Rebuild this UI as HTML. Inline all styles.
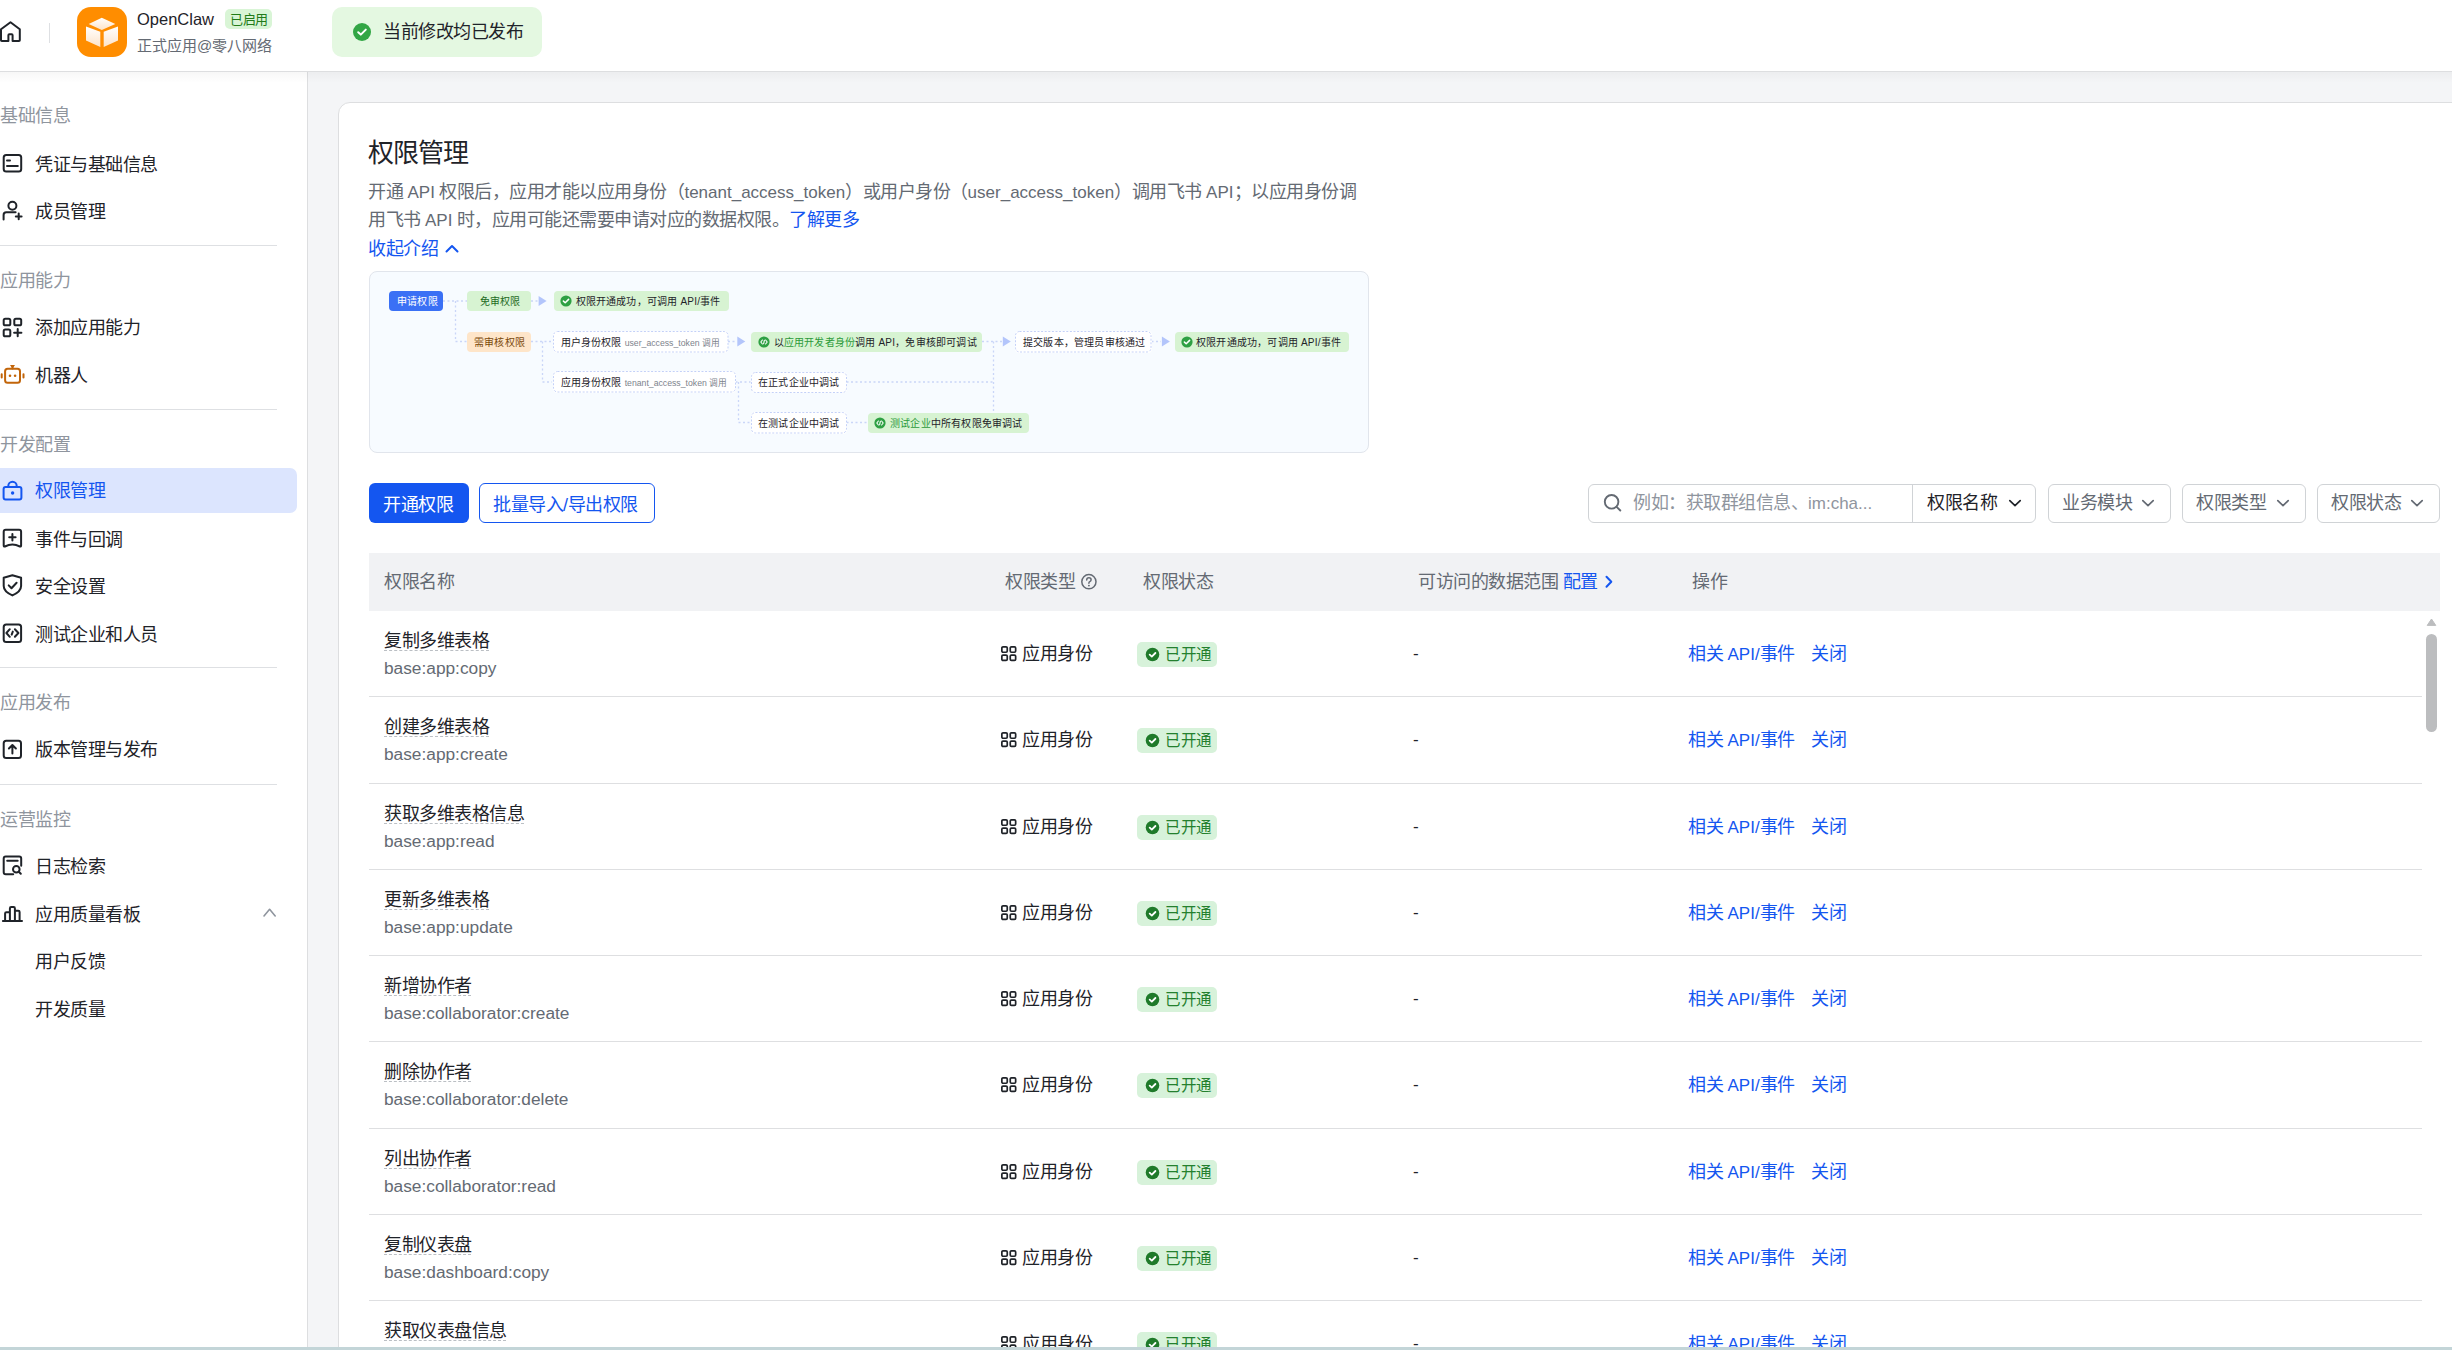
<!DOCTYPE html>
<html lang="zh-CN">
<head>
<meta charset="utf-8">
<style>
*{box-sizing:border-box;margin:0;padding:0}
html,body{width:2452px;height:1350px;overflow:hidden;background:#fff}
body{font-family:"Liberation Sans",sans-serif;color:#1f2329;position:relative}
.a{position:absolute;white-space:nowrap}
.ic{position:absolute;overflow:visible}
#hdr{left:0;top:0;width:2452px;height:72px;background:#fff;border-bottom:1px solid #dddee0}
#side{left:0;top:72px;width:308px;height:1275px;background:#fff;border-right:1px solid #dddee0}
#mainbg{left:308px;top:72px;width:2144px;height:1275px;background:#f4f5f7}
#card{left:338px;top:102px;width:2300px;height:1400px;background:#fff;border:1px solid #dddee0;border-radius:12px}
#foot{left:0;top:1347px;width:2452px;height:3px;background:#c3d5d8}
.st{font-size:18px;letter-spacing:-0.5px;line-height:20px;color:#8f959e}
.it{font-size:18px;letter-spacing:-0.5px;line-height:20px;color:#1f2329}
.l{font-size:0.945em;letter-spacing:0}
.dg{font-size:10px;letter-spacing:0.2px;line-height:12px;font-weight:500;color:#1f2329}
.db{position:absolute;border-radius:4px}
.dw{background:#fff}
.dgr{background:#d7f3d2}
</style>
</head>
<body>
<div class="a" id="mainbg"></div>
<div class="a" id="hdr"></div>
<div class="a" id="side"></div>
<div class="a" id="card"></div>
<div class="a" id="foot"></div>
<div class="a" style="left:0;top:72px;width:2452px;height:11px;background:linear-gradient(rgba(0,0,0,0.03),rgba(0,0,0,0))"></div>
<svg class="ic" style="left:0;top:20px" width="24" height="24" viewBox="0 0 24 24"><path d="M1 9.2 L10.5 2.2 L19.8 9.2 V20.2 Q19.8 21 19 21 H12.6 V15.2 Q12.6 14.3 11.7 14.3 H9.3 Q8.4 14.3 8.4 15.2 V21 H1.8 Q1 21 1 20.2 Z" fill="none" stroke="#1f2329" stroke-width="2" stroke-linejoin="round"/></svg>
<div class="a" style="left:49px;top:23px;width:1px;height:20px;background:#dee0e3"></div>
<svg class="ic" style="left:77px;top:7px" width="50" height="50" viewBox="0 0 50 50">
<defs><linearGradient id="cg" x1="0" y1="0" x2="0" y2="1"><stop offset="0" stop-color="#fff"/><stop offset="1" stop-color="#fde3c8"/></linearGradient></defs>
<rect x="0" y="0" width="50" height="50" rx="14" fill="#ff8d00"/>
<path d="M11.7 16.9 L24.8 10.7 L38.3 16.9 L24.8 23 Z" fill="url(#cg)"/>
<path d="M9 19.6 L23.3 24.8 L23.3 40 L9 33.4 Z" fill="url(#cg)"/>
<path d="M26.7 24.8 L41 19.6 L41 33.4 L26.7 40 Z" fill="url(#cg)"/>
</svg>
<div class="a" style="left:137px;top:9px;font-size:16.5px;line-height:20px;color:#1f2329">OpenClaw</div>
<div class="a" style="left:225px;top:9px;width:47px;height:20px;border-radius:5px;background:#d9f5d6"></div>
<div class="a" style="left:230px;top:11px;font-size:13px;letter-spacing:-0.5px;line-height:18px;color:#237b19">已启用</div>
<div class="a" style="left:137px;top:37px;font-size:15px;line-height:18px;color:#646a73">正式应用@零八网络</div>
<div class="a" style="left:332px;top:7px;width:210px;height:50px;border-radius:10px;background:#e4f8e1"></div>
<svg class="ic" style="left:353px;top:23px" width="18" height="18" viewBox="0 0 18 18"><circle cx="9" cy="9" r="9" fill="#32a645"/><path d="M5.2 9.2 L7.8 11.6 L12.8 6.6" fill="none" stroke="#fff" stroke-width="2" stroke-linecap="round" stroke-linejoin="round"/></svg>
<div class="a" style="left:383px;top:21px;font-size:18px;letter-spacing:-0.5px;line-height:22px;color:#1f2329">当前修改均已发布</div>
<div class="a st" style="left:0;top:106px">基础信息</div>
<div class="a st" style="left:0;top:271px">应用能力</div>
<div class="a st" style="left:0;top:435px">开发配置</div>
<div class="a st" style="left:0;top:693px">应用发布</div>
<div class="a st" style="left:0;top:810px">运营监控</div>
<div class="a" style="left:0;top:245px;width:277px;height:1px;background:#dee0e3"></div>
<div class="a" style="left:0;top:409px;width:277px;height:1px;background:#dee0e3"></div>
<div class="a" style="left:0;top:667px;width:277px;height:1px;background:#dee0e3"></div>
<div class="a" style="left:0;top:784px;width:277px;height:1px;background:#dee0e3"></div>
<div class="a" style="left:0;top:468px;width:297px;height:45px;border-radius:0 7px 7px 0;background:#dce5fe"></div>
<div class="a it" style="left:35px;top:155px;color:#1f2329">凭证与基础信息</div>
<div class="a it" style="left:35px;top:202px;color:#1f2329">成员管理</div>
<div class="a it" style="left:35px;top:318px;color:#1f2329">添加应用能力</div>
<div class="a it" style="left:35px;top:366px;color:#1f2329">机器人</div>
<div class="a it" style="left:35px;top:481px;color:#1456f0">权限管理</div>
<div class="a it" style="left:35px;top:530px;color:#1f2329">事件与回调</div>
<div class="a it" style="left:35px;top:577px;color:#1f2329">安全设置</div>
<div class="a it" style="left:35px;top:625px;color:#1f2329">测试企业和人员</div>
<div class="a it" style="left:35px;top:740px;color:#1f2329">版本管理与发布</div>
<div class="a it" style="left:35px;top:857px;color:#1f2329">日志检索</div>
<div class="a it" style="left:35px;top:905px;color:#1f2329">应用质量看板</div>
<div class="a it" style="left:35px;top:952px;color:#1f2329">用户反馈</div>
<div class="a it" style="left:35px;top:1000px;color:#1f2329">开发质量</div>
<svg class="ic" style="left:0;top:151px" width="25" height="25" viewBox="0 0 25 25"><g stroke="#1f2329" stroke-width="2" fill="none" stroke-linecap="round" stroke-linejoin="round"><rect x="3.7" y="4.1" width="17.5" height="16.4" rx="2.5"/><path d="M7 9.6 H10"/><path d="M7 15.1 H17.8"/></g></svg>
<svg class="ic" style="left:0;top:198px" width="25" height="25" viewBox="0 0 25 25"><g stroke="#1f2329" stroke-width="2" fill="none" stroke-linecap="round" stroke-linejoin="round"><circle cx="12.4" cy="7.7" r="4"/><path d="M3.6 21.4 V17 Q3.6 14.3 6.3 14.3 H15.6"/><path d="M15.8 18.4 H21.6 M18.7 15.5 V21.3"/></g></svg>
<svg class="ic" style="left:0;top:314px" width="25" height="25" viewBox="0 0 25 25"><g stroke="#1f2329" stroke-width="2" fill="none" stroke-linecap="round" stroke-linejoin="round"><rect x="3.7" y="4.7" width="6.6" height="6.6" rx="1.6"/><rect x="14.3" y="4.7" width="6.9" height="6.6" rx="1.6"/><rect x="3.7" y="15.4" width="6.6" height="6.9" rx="1.6"/><path d="M14.1 18.7 H21.4 M17.7 15.1 V22.3"/></g></svg>
<svg class="ic" style="left:0;top:363px" width="25" height="25" viewBox="0 0 25 25"><g stroke="#c2650a" stroke-width="2" fill="none" stroke-linecap="round" stroke-linejoin="round"><rect x="5.1" y="5.8" width="14.9" height="14" rx="2.5"/><path d="M1.7 11.2 V14.4 M23.5 11.2 V14.4"/><path d="M12.5 3 V5.5"/></g><g fill="#c2650a"><path d="M10 2.1 H15 L13.3 4.4 H11.7 Z"/><circle cx="10" cy="12.8" r="1.3"/><circle cx="15.1" cy="12.8" r="1.3"/></g></svg>
<svg class="ic" style="left:0;top:478px" width="25" height="25" viewBox="0 0 25 25"><g stroke="#1456f0" stroke-width="2" fill="none" stroke-linecap="round" stroke-linejoin="round"><rect x="3.6" y="9" width="17.8" height="12.5" rx="2"/><path d="M8.3 9 V7.9 A4.2 4.2 0 0 1 16.7 7.9 V9"/></g><g fill="#1456f0"><circle cx="12.6" cy="15" r="1.7"/></g></svg>
<svg class="ic" style="left:0;top:525px" width="25" height="25" viewBox="0 0 25 25"><g stroke="#1f2329" stroke-width="2" fill="none" stroke-linecap="round" stroke-linejoin="round"><path d="M3.7 20.6 V6.7 Q3.7 4.7 5.7 4.7 H19.1 Q21.1 4.7 21.1 6.7 V20.6 Q21.1 21.8 19.9 21.5 Q16 19.6 12.4 19.6 Q8.8 19.6 4.9 21.5 Q3.7 21.8 3.7 20.6 Z"/><path d="M9.2 12.3 H15.6 M12.4 9.1 V15.5"/></g></svg>
<svg class="ic" style="left:0;top:573px" width="25" height="25" viewBox="0 0 25 25"><g stroke="#1f2329" stroke-width="2" fill="none" stroke-linecap="round" stroke-linejoin="round"><path d="M12.4 2.3 L21.1 4.8 V13 Q21.1 18.5 12.4 22.4 Q3.7 18.5 3.7 13 V4.8 Z"/><path d="M8.7 12.4 L11.5 15.2 L16.6 9.7"/></g></svg>
<svg class="ic" style="left:0;top:621px" width="25" height="25" viewBox="0 0 25 25"><g stroke="#1f2329" stroke-width="2" fill="none" stroke-linecap="round" stroke-linejoin="round"><rect x="3.7" y="3.4" width="17.4" height="17.6" rx="2.5"/><path d="M9.8 8.2 L6.4 12 L9.8 15.8 M14.9 8.2 L18.4 12 L14.9 15.8 M12.8 10.6 L11.7 13.6"/></g></svg>
<svg class="ic" style="left:0;top:737px" width="25" height="25" viewBox="0 0 25 25"><g stroke="#1f2329" stroke-width="2" fill="none" stroke-linecap="round" stroke-linejoin="round"><rect x="3.7" y="3.7" width="17.3" height="17.3" rx="2.5"/><path d="M8.9 11.5 L12.4 8 L15.9 11.5 M12.4 8.2 V16.6"/></g></svg>
<svg class="ic" style="left:0;top:853px" width="25" height="25" viewBox="0 0 25 25"><g stroke="#1f2329" stroke-width="2" fill="none" stroke-linecap="round" stroke-linejoin="round"><path d="M21.2 12.8 V5.6 Q21.2 3.6 19.2 3.6 H5.7 Q3.7 3.6 3.7 5.6 V19.2 Q3.7 21.2 5.7 21.2 H13.2"/><path d="M7.2 7.7 H17.7"/><circle cx="16.3" cy="16.3" r="3.3"/><path d="M18.8 18.8 L20.8 20.8"/></g></svg>
<svg class="ic" style="left:0;top:901px" width="25" height="25" viewBox="0 0 25 25"><g stroke="#1f2329" stroke-width="2" fill="none" stroke-linecap="round" stroke-linejoin="round"><path d="M2.9 20.1 H22 M5.1 20.1 V12.6 Q5.1 11.3 6.4 11.3 H9.9 M9.9 20.1 V7.4 Q9.9 6.1 11.2 6.1 H13.6 Q14.9 6.1 14.9 7.4 V20.1 M14.9 9.7 H18.3 Q19.6 9.7 19.6 11 V20.1"/></g></svg>
<svg class="ic" style="left:260px;top:904px" width="18" height="16" viewBox="0 0 18 16"><path d="M4 12 L9.6 5.3 L15.2 12" fill="none" stroke="#8f959e" stroke-width="1.6" stroke-linecap="round" stroke-linejoin="round"/></svg>
<div class="a" style="left:368px;top:138px;font-size:26px;letter-spacing:-1px;line-height:30px;color:#1f2329">权限管理</div>
<div class="a" style="left:368px;top:181px;font-size:18px;letter-spacing:-0.5px;line-height:22px;color:#646a73">开通 <span class="l">API</span> 权限后，应用才能以应用身份（<span class="l">tenant_access_token</span>）或用户身份（<span class="l">user_access_token</span>）调用飞书 <span class="l">API</span>；以应用身份调</div>
<div class="a" style="left:368px;top:209px;font-size:18px;letter-spacing:-0.5px;line-height:22px;color:#646a73">用飞书 <span class="l">API</span> 时，应用可能还需要申请对应的数据权限。<span style="color:#1456f0">了解更多</span></div>
<div class="a" style="left:368px;top:238px;font-size:18px;letter-spacing:-0.5px;line-height:22px;color:#1456f0">收起介绍</div>
<svg class="ic" style="left:444px;top:241px" width="16" height="14" viewBox="0 0 16 14"><path d="M2.5 10.5 L8 5 L13.5 10.5" fill="none" stroke="#1456f0" stroke-width="2" stroke-linecap="round" stroke-linejoin="round"/></svg>
<div class="a" style="left:369px;top:271px;width:1000px;height:182px;background:#f7fbff;border:1px solid #e1e5ec;border-radius:8px"></div>
<svg class="ic" style="left:0;top:0" width="2452" height="1350" viewBox="0 0 2452 1350"><g stroke="#cad6f8" stroke-width="1.3" stroke-dasharray="2 2.5" fill="none"><path d="M443 301 L467 301"/><path d="M455.5 301 L455.5 341.5"/><path d="M455.5 341.5 L467 341.5"/><path d="M531 301 L538 301"/><path d="M531 341.5 L552 341.5"/><path d="M542.5 341.5 L542.5 382"/><path d="M542.5 382 L552 382"/><path d="M728 341.5 L737 341.5"/><path d="M735.5 382 L750.5 382"/><path d="M738.5 382 L738.5 422.5"/><path d="M738.5 422.5 L750.5 422.5"/><path d="M846.5 382 L993.5 382"/><path d="M846.5 422.5 L868 422.5"/><path d="M982 341.5 L1002 341.5"/><path d="M993.5 341.5 L993.5 413"/><path d="M1151.5 341.5 L1161 341.5"/></g><g fill="#b3c5fb"><path d="M538.6 296 L546.6 301 L538.6 306 Z"/><path d="M737.3 336.5 L745.3 341.5 L737.3 346.5 Z"/><path d="M1002.8 336.5 L1010.8 341.5 L1002.8 346.5 Z"/><path d="M1161.9 336.5 L1169.9 341.5 L1161.9 346.5 Z"/></g></svg>
<div class="db " style="left:389px;top:291px;width:54px;height:20px;background:#3a70f5"></div>
<div class="a dg" style="left:397px;top:296px;color:#fff">申请权限</div>
<div class="db dgr" style="left:467px;top:291px;width:64px;height:20px;"></div>
<div class="a dg" style="left:479.5px;top:296px;color:#236b1e">免审权限</div>
<div class="db dgr" style="left:553.5px;top:291px;width:175.5px;height:20px;"></div>
<svg class="ic" style="left:560px;top:295px" width="12" height="12" viewBox="0 0 12 12"><circle cx="6" cy="6" r="5.6" fill="#2ea043"/><path d="M3.4 6.1 L5.2 7.8 L8.6 4.4" fill="none" stroke="#fff" stroke-width="1.5" stroke-linecap="round" stroke-linejoin="round"/></svg>
<div class="a dg" style="left:575.5px;top:296px;">权限开通成功，可调用 API/事件</div>
<div class="db " style="left:467px;top:332px;width:64px;height:20px;background:#fee5c9"></div>
<div class="a dg" style="left:474px;top:336.5px;color:#7b4a0c">需审核权限</div>
<div class="db dw" style="left:552.5px;top:331px;width:175.5px;height:21.5px;"></div>
<svg class="ic" style="left:552.5px;top:331px" width="175.5" height="21.5"><rect x="0.5" y="0.5" width="174.5" height="20.5" rx="4" fill="none" stroke="#c4d1f8" stroke-width="1" stroke-dasharray="2 1.6"/></svg>
<div class="a dg" style="left:560.5px;top:336.5px;">用户身份权限 <span style="font-size:8.7px;letter-spacing:0;font-weight:400;color:#7d838c">user_access_token 调用</span></div>
<div class="db dw" style="left:552.5px;top:371px;width:183.0px;height:21.5px;"></div>
<svg class="ic" style="left:552.5px;top:371px" width="183.0" height="21.5"><rect x="0.5" y="0.5" width="182.0" height="20.5" rx="4" fill="none" stroke="#c4d1f8" stroke-width="1" stroke-dasharray="2 1.6"/></svg>
<div class="a dg" style="left:560.5px;top:377px;">应用身份权限 <span style="font-size:8.7px;letter-spacing:0;font-weight:400;color:#7d838c">tenant_access_token 调用</span></div>
<div class="db dgr" style="left:751px;top:332px;width:231px;height:19.5px;"></div>
<svg class="ic" style="left:757.5px;top:335.5px" width="12" height="12" viewBox="0 0 12 12"><circle cx="6" cy="6" r="5.6" fill="#2ea043"/><path d="M4.4 4 L2.8 6 L4.4 8 M7.6 4 L9.2 6 L7.6 8 M6.4 4.2 L5.6 7.8" fill="none" stroke="#fff" stroke-width="1.1" stroke-linecap="round" stroke-linejoin="round"/></svg>
<div class="a dg" style="left:773.5px;top:336.5px;">以<span style="color:#2c9a3a">应用开发者身份</span>调用 API，免审核即可调试</div>
<div class="db dw" style="left:750.5px;top:371.5px;width:96.0px;height:21.0px;"></div>
<svg class="ic" style="left:750.5px;top:371.5px" width="96.0" height="21.0"><rect x="0.5" y="0.5" width="95.0" height="20.0" rx="4" fill="none" stroke="#c4d1f8" stroke-width="1" stroke-dasharray="2 1.6"/></svg>
<div class="a dg" style="left:758px;top:377px;">在正式企业中调试</div>
<div class="db dw" style="left:750.5px;top:412px;width:96.0px;height:21.5px;"></div>
<svg class="ic" style="left:750.5px;top:412px" width="96.0" height="21.5"><rect x="0.5" y="0.5" width="95.0" height="20.5" rx="4" fill="none" stroke="#c4d1f8" stroke-width="1" stroke-dasharray="2 1.6"/></svg>
<div class="a dg" style="left:758px;top:417.5px;">在测试企业中调试</div>
<div class="db dgr" style="left:868px;top:413px;width:160.5px;height:19.5px;"></div>
<svg class="ic" style="left:874px;top:416.5px" width="12" height="12" viewBox="0 0 12 12"><circle cx="6" cy="6" r="5.6" fill="#2ea043"/><path d="M4.4 4 L2.8 6 L4.4 8 M7.6 4 L9.2 6 L7.6 8 M6.4 4.2 L5.6 7.8" fill="none" stroke="#fff" stroke-width="1.1" stroke-linecap="round" stroke-linejoin="round"/></svg>
<div class="a dg" style="left:890px;top:417.5px;"><span style="color:#2c9a3a">测试企业</span>中所有权限免审调试</div>
<div class="db dw" style="left:1015px;top:331px;width:136.5px;height:21.5px;"></div>
<svg class="ic" style="left:1015px;top:331px" width="136.5" height="21.5"><rect x="0.5" y="0.5" width="135.5" height="20.5" rx="4" fill="none" stroke="#c4d1f8" stroke-width="1" stroke-dasharray="2 1.6"/></svg>
<div class="a dg" style="left:1023px;top:336.5px;">提交版本，管理员审核通过</div>
<div class="db dgr" style="left:1175px;top:331.5px;width:174px;height:20.5px;"></div>
<svg class="ic" style="left:1181px;top:335.5px" width="12" height="12" viewBox="0 0 12 12"><circle cx="6" cy="6" r="5.6" fill="#2ea043"/><path d="M3.4 6.1 L5.2 7.8 L8.6 4.4" fill="none" stroke="#fff" stroke-width="1.5" stroke-linecap="round" stroke-linejoin="round"/></svg>
<div class="a dg" style="left:1196px;top:336.5px;">权限开通成功，可调用 API/事件</div>
<div class="a" style="left:369px;top:483px;width:100px;height:40px;border-radius:6px;background:#1456f0"></div>
<div class="a" style="left:383px;top:494px;font-size:18px;letter-spacing:-0.5px;line-height:22px;color:#fff">开通权限</div>
<div class="a" style="left:479px;top:483px;width:176px;height:40px;border-radius:6px;border:1px solid #1456f0;background:#fff"></div>
<div class="a" style="left:493px;top:494px;font-size:18px;letter-spacing:-0.5px;line-height:22px;color:#1456f0">批量导入/导出权限</div>
<div class="a" style="left:1588px;top:484px;width:448px;height:39px;border-radius:6px;border:1px solid #d0d3d6;background:#fff"></div>
<div class="a" style="left:1912px;top:484px;width:1px;height:39px;background:#d0d3d6"></div>
<svg class="ic" style="left:1602px;top:492px" width="22" height="22" viewBox="0 0 22 22"><circle cx="9.6" cy="9.8" r="6.8" fill="none" stroke="#646a73" stroke-width="1.9"/><path d="M14.6 14.8 L18.3 18.5" stroke="#646a73" stroke-width="1.9" stroke-linecap="round"/></svg>
<div class="a" style="left:1633px;top:492px;font-size:18px;letter-spacing:-0.5px;line-height:22px;color:#8f959e">例如：获取群组信息、<span class="l">im:cha...</span></div>
<div class="a" style="left:1927px;top:492px;font-size:18px;letter-spacing:-0.5px;line-height:22px;color:#1f2329">权限名称</div>
<svg class="ic" style="left:2008px;top:498px" width="14" height="10" viewBox="0 0 14 10"><path d="M1.8 2.6 L7 7.6 L12.2 2.6" fill="none" stroke="#1f2329" stroke-width="1.7" stroke-linecap="round" stroke-linejoin="round"/></svg>
<div class="a" style="left:2047.5px;top:483.5px;width:123.0px;height:39.5px;border-radius:6px;border:1px solid #d0d3d6;background:#fff"></div>
<div class="a" style="left:2062.0px;top:492px;font-size:18px;letter-spacing:-0.5px;line-height:22px;color:#646a73">业务模块</div>
<svg class="ic" style="left:2140.5px;top:498px" width="14" height="10" viewBox="0 0 14 10"><path d="M1.8 2.6 L7 7.6 L12.2 2.6" fill="none" stroke="#646a73" stroke-width="1.7" stroke-linecap="round" stroke-linejoin="round"/></svg>
<div class="a" style="left:2181.5px;top:483.5px;width:124.0px;height:39.5px;border-radius:6px;border:1px solid #d0d3d6;background:#fff"></div>
<div class="a" style="left:2196.0px;top:492px;font-size:18px;letter-spacing:-0.5px;line-height:22px;color:#646a73">权限类型</div>
<svg class="ic" style="left:2275.5px;top:498px" width="14" height="10" viewBox="0 0 14 10"><path d="M1.8 2.6 L7 7.6 L12.2 2.6" fill="none" stroke="#646a73" stroke-width="1.7" stroke-linecap="round" stroke-linejoin="round"/></svg>
<div class="a" style="left:2316.5px;top:483.5px;width:123.0px;height:39.5px;border-radius:6px;border:1px solid #d0d3d6;background:#fff"></div>
<div class="a" style="left:2331.0px;top:492px;font-size:18px;letter-spacing:-0.5px;line-height:22px;color:#646a73">权限状态</div>
<svg class="ic" style="left:2409.5px;top:498px" width="14" height="10" viewBox="0 0 14 10"><path d="M1.8 2.6 L7 7.6 L12.2 2.6" fill="none" stroke="#646a73" stroke-width="1.7" stroke-linecap="round" stroke-linejoin="round"/></svg>
<div class="a" style="left:369px;top:553px;width:2071px;height:58px;background:#f1f2f4"></div>
<div class="a" style="left:384px;top:571px;font-size:18px;letter-spacing:-0.5px;line-height:22px;color:#646a73">权限名称</div>
<div class="a" style="left:1005px;top:571px;font-size:18px;letter-spacing:-0.5px;line-height:22px;color:#646a73">权限类型</div>
<svg class="ic" style="left:1080px;top:573px" width="18" height="18" viewBox="0 0 18 18"><circle cx="8.9" cy="8.7" r="7.1" fill="none" stroke="#646a73" stroke-width="1.5"/><path d="M6.7 7 Q6.7 4.8 8.9 4.8 Q11.1 4.8 11.1 6.8 Q11.1 8.1 9.8 8.6 Q8.9 9 8.9 10.2" fill="none" stroke="#646a73" stroke-width="1.5" stroke-linecap="round"/><circle cx="8.9" cy="12.6" r="0.95" fill="#646a73"/></svg>
<div class="a" style="left:1143px;top:571px;font-size:18px;letter-spacing:-0.5px;line-height:22px;color:#646a73">权限状态</div>
<div class="a" style="left:1418px;top:571px;font-size:18px;letter-spacing:-0.5px;line-height:22px;color:#646a73">可访问的数据范围 <span style="color:#1456f0">配置</span></div>
<svg class="ic" style="left:1602px;top:573px" width="14" height="18" viewBox="0 0 14 18"><path d="M4.5 3.8 L9.3 8.8 L4.5 13.8" fill="none" stroke="#1456f0" stroke-width="2" stroke-linecap="round" stroke-linejoin="round"/></svg>
<div class="a" style="left:1692px;top:571px;font-size:18px;letter-spacing:-0.5px;line-height:22px;color:#646a73">操作</div>
<div class="a" style="left:369px;top:611px;width:2071px;height:736px;overflow:hidden">
<div class="a" style="left:0;top:0.0px;width:2053px;height:86.25px;border-bottom:1px solid #dedfe1"></div>
<div class="a" style="left:15px;top:19.0px;font-size:18px;letter-spacing:-0.5px;line-height:22px;color:#1f2329">复制多维表格</div>
<div class="a" style="left:15px;top:39.0px;width:104.5px;height:0;border-top:1px dashed #bbbfc4"></div>
<div class="a" style="left:15px;top:46.0px;font-size:17.3px;line-height:22px;color:#646a73">base:app:copy</div>
<svg class="ic" style="left:632px;top:35.0px" width="16" height="16" viewBox="0 0 16 16"><g fill="none" stroke="#1f2329" stroke-width="1.7"><rect x="0.85" y="0.85" width="5.4" height="5.4" rx="1.2"/><rect x="9.25" y="0.85" width="5.4" height="5.4" rx="1.2"/><rect x="0.85" y="9.05" width="5.4" height="5.4" rx="1.2"/><rect x="9.25" y="9.05" width="5.4" height="5.4" rx="1.2"/></g></svg>
<div class="a" style="left:653px;top:32.0px;font-size:18px;letter-spacing:-0.5px;line-height:22px;color:#1f2329">应用身份</div>
<div class="a" style="left:768px;top:31.0px;width:80px;height:25px;border-radius:5px;background:#d7f2da"></div>
<svg class="ic" style="left:777px;top:37.0px" width="14" height="14" viewBox="0 0 14 14"><circle cx="6.5" cy="6.5" r="6.8" fill="#1f7a2a"/><path d="M3.7 6.7 L5.8 8.6 L9.4 5" fill="none" stroke="#fff" stroke-width="1.8" stroke-linecap="round" stroke-linejoin="round"/></svg>
<div class="a" style="left:796px;top:34.0px;font-size:15.5px;letter-spacing:-0.5px;line-height:20px;color:#24802e">已开通</div>
<div class="a" style="left:1044px;top:32.0px;font-size:17px;line-height:22px;color:#1f2329">-</div>
<div class="a" style="left:1319px;top:32.0px;font-size:18px;letter-spacing:-0.5px;line-height:22px;color:#1456f0">相关 <span class="l">API/</span>事件</div>
<div class="a" style="left:1442px;top:32.0px;font-size:18px;letter-spacing:-0.5px;line-height:22px;color:#1456f0">关闭</div>
<div class="a" style="left:0;top:86.25px;width:2053px;height:86.25px;border-bottom:1px solid #dedfe1"></div>
<div class="a" style="left:15px;top:105.25px;font-size:18px;letter-spacing:-0.5px;line-height:22px;color:#1f2329">创建多维表格</div>
<div class="a" style="left:15px;top:125.25px;width:104.5px;height:0;border-top:1px dashed #bbbfc4"></div>
<div class="a" style="left:15px;top:132.25px;font-size:17.3px;line-height:22px;color:#646a73">base:app:create</div>
<svg class="ic" style="left:632px;top:121.25px" width="16" height="16" viewBox="0 0 16 16"><g fill="none" stroke="#1f2329" stroke-width="1.7"><rect x="0.85" y="0.85" width="5.4" height="5.4" rx="1.2"/><rect x="9.25" y="0.85" width="5.4" height="5.4" rx="1.2"/><rect x="0.85" y="9.05" width="5.4" height="5.4" rx="1.2"/><rect x="9.25" y="9.05" width="5.4" height="5.4" rx="1.2"/></g></svg>
<div class="a" style="left:653px;top:118.25px;font-size:18px;letter-spacing:-0.5px;line-height:22px;color:#1f2329">应用身份</div>
<div class="a" style="left:768px;top:117.25px;width:80px;height:25px;border-radius:5px;background:#d7f2da"></div>
<svg class="ic" style="left:777px;top:123.25px" width="14" height="14" viewBox="0 0 14 14"><circle cx="6.5" cy="6.5" r="6.8" fill="#1f7a2a"/><path d="M3.7 6.7 L5.8 8.6 L9.4 5" fill="none" stroke="#fff" stroke-width="1.8" stroke-linecap="round" stroke-linejoin="round"/></svg>
<div class="a" style="left:796px;top:120.25px;font-size:15.5px;letter-spacing:-0.5px;line-height:20px;color:#24802e">已开通</div>
<div class="a" style="left:1044px;top:118.25px;font-size:17px;line-height:22px;color:#1f2329">-</div>
<div class="a" style="left:1319px;top:118.25px;font-size:18px;letter-spacing:-0.5px;line-height:22px;color:#1456f0">相关 <span class="l">API/</span>事件</div>
<div class="a" style="left:1442px;top:118.25px;font-size:18px;letter-spacing:-0.5px;line-height:22px;color:#1456f0">关闭</div>
<div class="a" style="left:0;top:172.5px;width:2053px;height:86.25px;border-bottom:1px solid #dedfe1"></div>
<div class="a" style="left:15px;top:191.5px;font-size:18px;letter-spacing:-0.5px;line-height:22px;color:#1f2329">获取多维表格信息</div>
<div class="a" style="left:15px;top:211.5px;width:139.5px;height:0;border-top:1px dashed #bbbfc4"></div>
<div class="a" style="left:15px;top:218.5px;font-size:17.3px;line-height:22px;color:#646a73">base:app:read</div>
<svg class="ic" style="left:632px;top:207.5px" width="16" height="16" viewBox="0 0 16 16"><g fill="none" stroke="#1f2329" stroke-width="1.7"><rect x="0.85" y="0.85" width="5.4" height="5.4" rx="1.2"/><rect x="9.25" y="0.85" width="5.4" height="5.4" rx="1.2"/><rect x="0.85" y="9.05" width="5.4" height="5.4" rx="1.2"/><rect x="9.25" y="9.05" width="5.4" height="5.4" rx="1.2"/></g></svg>
<div class="a" style="left:653px;top:204.5px;font-size:18px;letter-spacing:-0.5px;line-height:22px;color:#1f2329">应用身份</div>
<div class="a" style="left:768px;top:203.5px;width:80px;height:25px;border-radius:5px;background:#d7f2da"></div>
<svg class="ic" style="left:777px;top:209.5px" width="14" height="14" viewBox="0 0 14 14"><circle cx="6.5" cy="6.5" r="6.8" fill="#1f7a2a"/><path d="M3.7 6.7 L5.8 8.6 L9.4 5" fill="none" stroke="#fff" stroke-width="1.8" stroke-linecap="round" stroke-linejoin="round"/></svg>
<div class="a" style="left:796px;top:206.5px;font-size:15.5px;letter-spacing:-0.5px;line-height:20px;color:#24802e">已开通</div>
<div class="a" style="left:1044px;top:204.5px;font-size:17px;line-height:22px;color:#1f2329">-</div>
<div class="a" style="left:1319px;top:204.5px;font-size:18px;letter-spacing:-0.5px;line-height:22px;color:#1456f0">相关 <span class="l">API/</span>事件</div>
<div class="a" style="left:1442px;top:204.5px;font-size:18px;letter-spacing:-0.5px;line-height:22px;color:#1456f0">关闭</div>
<div class="a" style="left:0;top:258.75px;width:2053px;height:86.25px;border-bottom:1px solid #dedfe1"></div>
<div class="a" style="left:15px;top:277.75px;font-size:18px;letter-spacing:-0.5px;line-height:22px;color:#1f2329">更新多维表格</div>
<div class="a" style="left:15px;top:297.75px;width:104.5px;height:0;border-top:1px dashed #bbbfc4"></div>
<div class="a" style="left:15px;top:304.75px;font-size:17.3px;line-height:22px;color:#646a73">base:app:update</div>
<svg class="ic" style="left:632px;top:293.75px" width="16" height="16" viewBox="0 0 16 16"><g fill="none" stroke="#1f2329" stroke-width="1.7"><rect x="0.85" y="0.85" width="5.4" height="5.4" rx="1.2"/><rect x="9.25" y="0.85" width="5.4" height="5.4" rx="1.2"/><rect x="0.85" y="9.05" width="5.4" height="5.4" rx="1.2"/><rect x="9.25" y="9.05" width="5.4" height="5.4" rx="1.2"/></g></svg>
<div class="a" style="left:653px;top:290.75px;font-size:18px;letter-spacing:-0.5px;line-height:22px;color:#1f2329">应用身份</div>
<div class="a" style="left:768px;top:289.75px;width:80px;height:25px;border-radius:5px;background:#d7f2da"></div>
<svg class="ic" style="left:777px;top:295.75px" width="14" height="14" viewBox="0 0 14 14"><circle cx="6.5" cy="6.5" r="6.8" fill="#1f7a2a"/><path d="M3.7 6.7 L5.8 8.6 L9.4 5" fill="none" stroke="#fff" stroke-width="1.8" stroke-linecap="round" stroke-linejoin="round"/></svg>
<div class="a" style="left:796px;top:292.75px;font-size:15.5px;letter-spacing:-0.5px;line-height:20px;color:#24802e">已开通</div>
<div class="a" style="left:1044px;top:290.75px;font-size:17px;line-height:22px;color:#1f2329">-</div>
<div class="a" style="left:1319px;top:290.75px;font-size:18px;letter-spacing:-0.5px;line-height:22px;color:#1456f0">相关 <span class="l">API/</span>事件</div>
<div class="a" style="left:1442px;top:290.75px;font-size:18px;letter-spacing:-0.5px;line-height:22px;color:#1456f0">关闭</div>
<div class="a" style="left:0;top:345.0px;width:2053px;height:86.25px;border-bottom:1px solid #dedfe1"></div>
<div class="a" style="left:15px;top:364.0px;font-size:18px;letter-spacing:-0.5px;line-height:22px;color:#1f2329">新增协作者</div>
<div class="a" style="left:15px;top:384.0px;width:87.0px;height:0;border-top:1px dashed #bbbfc4"></div>
<div class="a" style="left:15px;top:391.0px;font-size:17.3px;line-height:22px;color:#646a73">base:collaborator:create</div>
<svg class="ic" style="left:632px;top:380.0px" width="16" height="16" viewBox="0 0 16 16"><g fill="none" stroke="#1f2329" stroke-width="1.7"><rect x="0.85" y="0.85" width="5.4" height="5.4" rx="1.2"/><rect x="9.25" y="0.85" width="5.4" height="5.4" rx="1.2"/><rect x="0.85" y="9.05" width="5.4" height="5.4" rx="1.2"/><rect x="9.25" y="9.05" width="5.4" height="5.4" rx="1.2"/></g></svg>
<div class="a" style="left:653px;top:377.0px;font-size:18px;letter-spacing:-0.5px;line-height:22px;color:#1f2329">应用身份</div>
<div class="a" style="left:768px;top:376.0px;width:80px;height:25px;border-radius:5px;background:#d7f2da"></div>
<svg class="ic" style="left:777px;top:382.0px" width="14" height="14" viewBox="0 0 14 14"><circle cx="6.5" cy="6.5" r="6.8" fill="#1f7a2a"/><path d="M3.7 6.7 L5.8 8.6 L9.4 5" fill="none" stroke="#fff" stroke-width="1.8" stroke-linecap="round" stroke-linejoin="round"/></svg>
<div class="a" style="left:796px;top:379.0px;font-size:15.5px;letter-spacing:-0.5px;line-height:20px;color:#24802e">已开通</div>
<div class="a" style="left:1044px;top:377.0px;font-size:17px;line-height:22px;color:#1f2329">-</div>
<div class="a" style="left:1319px;top:377.0px;font-size:18px;letter-spacing:-0.5px;line-height:22px;color:#1456f0">相关 <span class="l">API/</span>事件</div>
<div class="a" style="left:1442px;top:377.0px;font-size:18px;letter-spacing:-0.5px;line-height:22px;color:#1456f0">关闭</div>
<div class="a" style="left:0;top:431.25px;width:2053px;height:86.25px;border-bottom:1px solid #dedfe1"></div>
<div class="a" style="left:15px;top:450.25px;font-size:18px;letter-spacing:-0.5px;line-height:22px;color:#1f2329">删除协作者</div>
<div class="a" style="left:15px;top:470.25px;width:87.0px;height:0;border-top:1px dashed #bbbfc4"></div>
<div class="a" style="left:15px;top:477.25px;font-size:17.3px;line-height:22px;color:#646a73">base:collaborator:delete</div>
<svg class="ic" style="left:632px;top:466.25px" width="16" height="16" viewBox="0 0 16 16"><g fill="none" stroke="#1f2329" stroke-width="1.7"><rect x="0.85" y="0.85" width="5.4" height="5.4" rx="1.2"/><rect x="9.25" y="0.85" width="5.4" height="5.4" rx="1.2"/><rect x="0.85" y="9.05" width="5.4" height="5.4" rx="1.2"/><rect x="9.25" y="9.05" width="5.4" height="5.4" rx="1.2"/></g></svg>
<div class="a" style="left:653px;top:463.25px;font-size:18px;letter-spacing:-0.5px;line-height:22px;color:#1f2329">应用身份</div>
<div class="a" style="left:768px;top:462.25px;width:80px;height:25px;border-radius:5px;background:#d7f2da"></div>
<svg class="ic" style="left:777px;top:468.25px" width="14" height="14" viewBox="0 0 14 14"><circle cx="6.5" cy="6.5" r="6.8" fill="#1f7a2a"/><path d="M3.7 6.7 L5.8 8.6 L9.4 5" fill="none" stroke="#fff" stroke-width="1.8" stroke-linecap="round" stroke-linejoin="round"/></svg>
<div class="a" style="left:796px;top:465.25px;font-size:15.5px;letter-spacing:-0.5px;line-height:20px;color:#24802e">已开通</div>
<div class="a" style="left:1044px;top:463.25px;font-size:17px;line-height:22px;color:#1f2329">-</div>
<div class="a" style="left:1319px;top:463.25px;font-size:18px;letter-spacing:-0.5px;line-height:22px;color:#1456f0">相关 <span class="l">API/</span>事件</div>
<div class="a" style="left:1442px;top:463.25px;font-size:18px;letter-spacing:-0.5px;line-height:22px;color:#1456f0">关闭</div>
<div class="a" style="left:0;top:517.5px;width:2053px;height:86.25px;border-bottom:1px solid #dedfe1"></div>
<div class="a" style="left:15px;top:536.5px;font-size:18px;letter-spacing:-0.5px;line-height:22px;color:#1f2329">列出协作者</div>
<div class="a" style="left:15px;top:556.5px;width:87.0px;height:0;border-top:1px dashed #bbbfc4"></div>
<div class="a" style="left:15px;top:563.5px;font-size:17.3px;line-height:22px;color:#646a73">base:collaborator:read</div>
<svg class="ic" style="left:632px;top:552.5px" width="16" height="16" viewBox="0 0 16 16"><g fill="none" stroke="#1f2329" stroke-width="1.7"><rect x="0.85" y="0.85" width="5.4" height="5.4" rx="1.2"/><rect x="9.25" y="0.85" width="5.4" height="5.4" rx="1.2"/><rect x="0.85" y="9.05" width="5.4" height="5.4" rx="1.2"/><rect x="9.25" y="9.05" width="5.4" height="5.4" rx="1.2"/></g></svg>
<div class="a" style="left:653px;top:549.5px;font-size:18px;letter-spacing:-0.5px;line-height:22px;color:#1f2329">应用身份</div>
<div class="a" style="left:768px;top:548.5px;width:80px;height:25px;border-radius:5px;background:#d7f2da"></div>
<svg class="ic" style="left:777px;top:554.5px" width="14" height="14" viewBox="0 0 14 14"><circle cx="6.5" cy="6.5" r="6.8" fill="#1f7a2a"/><path d="M3.7 6.7 L5.8 8.6 L9.4 5" fill="none" stroke="#fff" stroke-width="1.8" stroke-linecap="round" stroke-linejoin="round"/></svg>
<div class="a" style="left:796px;top:551.5px;font-size:15.5px;letter-spacing:-0.5px;line-height:20px;color:#24802e">已开通</div>
<div class="a" style="left:1044px;top:549.5px;font-size:17px;line-height:22px;color:#1f2329">-</div>
<div class="a" style="left:1319px;top:549.5px;font-size:18px;letter-spacing:-0.5px;line-height:22px;color:#1456f0">相关 <span class="l">API/</span>事件</div>
<div class="a" style="left:1442px;top:549.5px;font-size:18px;letter-spacing:-0.5px;line-height:22px;color:#1456f0">关闭</div>
<div class="a" style="left:0;top:603.75px;width:2053px;height:86.25px;border-bottom:1px solid #dedfe1"></div>
<div class="a" style="left:15px;top:622.75px;font-size:18px;letter-spacing:-0.5px;line-height:22px;color:#1f2329">复制仪表盘</div>
<div class="a" style="left:15px;top:642.75px;width:87.0px;height:0;border-top:1px dashed #bbbfc4"></div>
<div class="a" style="left:15px;top:649.75px;font-size:17.3px;line-height:22px;color:#646a73">base:dashboard:copy</div>
<svg class="ic" style="left:632px;top:638.75px" width="16" height="16" viewBox="0 0 16 16"><g fill="none" stroke="#1f2329" stroke-width="1.7"><rect x="0.85" y="0.85" width="5.4" height="5.4" rx="1.2"/><rect x="9.25" y="0.85" width="5.4" height="5.4" rx="1.2"/><rect x="0.85" y="9.05" width="5.4" height="5.4" rx="1.2"/><rect x="9.25" y="9.05" width="5.4" height="5.4" rx="1.2"/></g></svg>
<div class="a" style="left:653px;top:635.75px;font-size:18px;letter-spacing:-0.5px;line-height:22px;color:#1f2329">应用身份</div>
<div class="a" style="left:768px;top:634.75px;width:80px;height:25px;border-radius:5px;background:#d7f2da"></div>
<svg class="ic" style="left:777px;top:640.75px" width="14" height="14" viewBox="0 0 14 14"><circle cx="6.5" cy="6.5" r="6.8" fill="#1f7a2a"/><path d="M3.7 6.7 L5.8 8.6 L9.4 5" fill="none" stroke="#fff" stroke-width="1.8" stroke-linecap="round" stroke-linejoin="round"/></svg>
<div class="a" style="left:796px;top:637.75px;font-size:15.5px;letter-spacing:-0.5px;line-height:20px;color:#24802e">已开通</div>
<div class="a" style="left:1044px;top:635.75px;font-size:17px;line-height:22px;color:#1f2329">-</div>
<div class="a" style="left:1319px;top:635.75px;font-size:18px;letter-spacing:-0.5px;line-height:22px;color:#1456f0">相关 <span class="l">API/</span>事件</div>
<div class="a" style="left:1442px;top:635.75px;font-size:18px;letter-spacing:-0.5px;line-height:22px;color:#1456f0">关闭</div>
<div class="a" style="left:0;top:690.0px;width:2053px;height:86.25px;border-bottom:1px solid #dedfe1"></div>
<div class="a" style="left:15px;top:709.0px;font-size:18px;letter-spacing:-0.5px;line-height:22px;color:#1f2329">获取仪表盘信息</div>
<div class="a" style="left:15px;top:729.0px;width:122.0px;height:0;border-top:1px dashed #bbbfc4"></div>
<div class="a" style="left:15px;top:736.0px;font-size:17.3px;line-height:22px;color:#646a73">base:dashboard:read</div>
<svg class="ic" style="left:632px;top:725.0px" width="16" height="16" viewBox="0 0 16 16"><g fill="none" stroke="#1f2329" stroke-width="1.7"><rect x="0.85" y="0.85" width="5.4" height="5.4" rx="1.2"/><rect x="9.25" y="0.85" width="5.4" height="5.4" rx="1.2"/><rect x="0.85" y="9.05" width="5.4" height="5.4" rx="1.2"/><rect x="9.25" y="9.05" width="5.4" height="5.4" rx="1.2"/></g></svg>
<div class="a" style="left:653px;top:722.0px;font-size:18px;letter-spacing:-0.5px;line-height:22px;color:#1f2329">应用身份</div>
<div class="a" style="left:768px;top:721.0px;width:80px;height:25px;border-radius:5px;background:#d7f2da"></div>
<svg class="ic" style="left:777px;top:727.0px" width="14" height="14" viewBox="0 0 14 14"><circle cx="6.5" cy="6.5" r="6.8" fill="#1f7a2a"/><path d="M3.7 6.7 L5.8 8.6 L9.4 5" fill="none" stroke="#fff" stroke-width="1.8" stroke-linecap="round" stroke-linejoin="round"/></svg>
<div class="a" style="left:796px;top:724.0px;font-size:15.5px;letter-spacing:-0.5px;line-height:20px;color:#24802e">已开通</div>
<div class="a" style="left:1044px;top:722.0px;font-size:17px;line-height:22px;color:#1f2329">-</div>
<div class="a" style="left:1319px;top:722.0px;font-size:18px;letter-spacing:-0.5px;line-height:22px;color:#1456f0">相关 <span class="l">API/</span>事件</div>
<div class="a" style="left:1442px;top:722.0px;font-size:18px;letter-spacing:-0.5px;line-height:22px;color:#1456f0">关闭</div>
</div>
<div class="a" style="left:2426px;top:634px;width:11px;height:98px;border-radius:5.5px;background:#bcbdbf"></div>
<svg class="ic" style="left:2426px;top:618px" width="12" height="9" viewBox="0 0 12 9"><path d="M5.5 1 L9.8 7.4 H1.2 Z" fill="#bcbdbf" stroke="#bcbdbf" stroke-width="1" stroke-linejoin="round"/></svg>
</body>
</html>
